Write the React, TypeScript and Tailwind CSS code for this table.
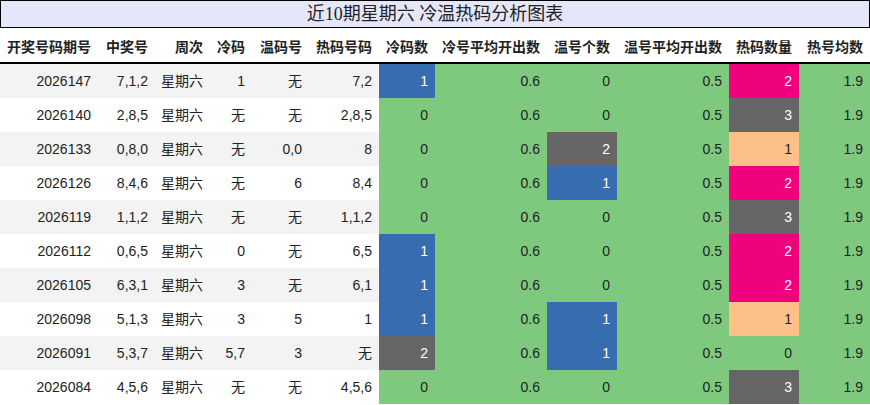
const BLUE = 'bg-[#386cb0] text-white';
const GRAY = 'bg-[#666666] text-white';
const PINK = 'bg-[#f0027f] text-white';
const PEACH = 'bg-[#fdc086] text-[#222]';
const GREEN = 'bg-[#7fc97f] text-[#222]';

const headers = ['开奖号码期号', '中奖号', '周次', '冷码', '温码号', '热码号码', '冷码数', '冷号平均开出数', '温号个数', '温号平均开出数', '热码数量', '热号均数'];

type Row = {
  issue: string; nums: string; cold: string; warm: string; hot: string;
  coldN: number; warmN: number; hotN: number;
};

const rows: Row[] = [
  { issue: '2026147', nums: '7,1,2', cold: '1', warm: '无', hot: '7,2', coldN: 1, warmN: 0, hotN: 2 },
  { issue: '2026140', nums: '2,8,5', cold: '无', warm: '无', hot: '2,8,5', coldN: 0, warmN: 0, hotN: 3 },
  { issue: '2026133', nums: '0,8,0', cold: '无', warm: '0,0', hot: '8', coldN: 0, warmN: 2, hotN: 1 },
  { issue: '2026126', nums: '8,4,6', cold: '无', warm: '6', hot: '8,4', coldN: 0, warmN: 1, hotN: 2 },
  { issue: '2026119', nums: '1,1,2', cold: '无', warm: '无', hot: '1,1,2', coldN: 0, warmN: 0, hotN: 3 },
  { issue: '2026112', nums: '0,6,5', cold: '0', warm: '无', hot: '6,5', coldN: 1, warmN: 0, hotN: 2 },
  { issue: '2026105', nums: '6,3,1', cold: '3', warm: '无', hot: '6,1', coldN: 1, warmN: 0, hotN: 2 },
  { issue: '2026098', nums: '5,1,3', cold: '3', warm: '5', hot: '1', coldN: 1, warmN: 1, hotN: 1 },
  { issue: '2026091', nums: '5,3,7', cold: '5,7', warm: '3', hot: '无', coldN: 2, warmN: 1, hotN: 0 },
  { issue: '2026084', nums: '4,5,6', cold: '无', warm: '无', hot: '4,5,6', coldN: 0, warmN: 0, hotN: 3 },
];

const countColor = (n: number) => (n === 0 ? GREEN : n === 1 ? BLUE : GRAY);
const hotColor = (n: number) => (n === 0 ? GREEN : n === 1 ? PEACH : n === 2 ? PINK : GRAY);

const cols = 'grid grid-cols-[98px_57px_55px_42px_57px_70px_56px_112px_70px_112px_70px_71px]';

export default function App() {
  return (
    <div className="w-[870px] h-[405px] overflow-hidden bg-white text-[#222] font-['Liberation_Sans','Noto_Sans_CJK_SC',sans-serif]">
      <div className="h-[28px] border border-black bg-[#e6e6fa] flex items-center justify-center text-[18px] leading-none font-['Liberation_Serif','Noto_Sans_CJK_SC',serif]">
        近10期星期六 冷温热码分析图表
      </div>
      <div className={`${cols} h-[36px] border-b-2 border-black text-[14px] font-bold`}>
        {headers.map((h) => (
          <div key={h} className="flex items-center justify-end pr-[7px] pt-[4px] whitespace-nowrap">{h}</div>
        ))}
      </div>
      {rows.map((r, i) => (
        <div key={r.issue} className={`${cols} h-[34px] text-[14px] ${i % 2 === 0 ? 'bg-[#f3f3f3]' : 'bg-white'}`}>
          <div className="flex items-center justify-end pr-[7px]">{r.issue}</div>
          <div className="flex items-center justify-end pr-[7px]">{r.nums}</div>
          <div className="flex items-center justify-end pr-[7px]">星期六</div>
          <div className="flex items-center justify-end pr-[7px]">{r.cold}</div>
          <div className="flex items-center justify-end pr-[7px]">{r.warm}</div>
          <div className="flex items-center justify-end pr-[7px]">{r.hot}</div>
          <div className={`flex items-center justify-end pr-[7px] ${countColor(r.coldN)}`}>{r.coldN}</div>
          <div className={`flex items-center justify-end pr-[7px] ${GREEN}`}>0.6</div>
          <div className={`flex items-center justify-end pr-[7px] ${countColor(r.warmN)}`}>{r.warmN}</div>
          <div className={`flex items-center justify-end pr-[7px] ${GREEN}`}>0.5</div>
          <div className={`flex items-center justify-end pr-[7px] ${hotColor(r.hotN)}`}>{r.hotN}</div>
          <div className={`flex items-center justify-end pr-[7px] ${GREEN}`}>1.9</div>
        </div>
      ))}
    </div>
  );
}
